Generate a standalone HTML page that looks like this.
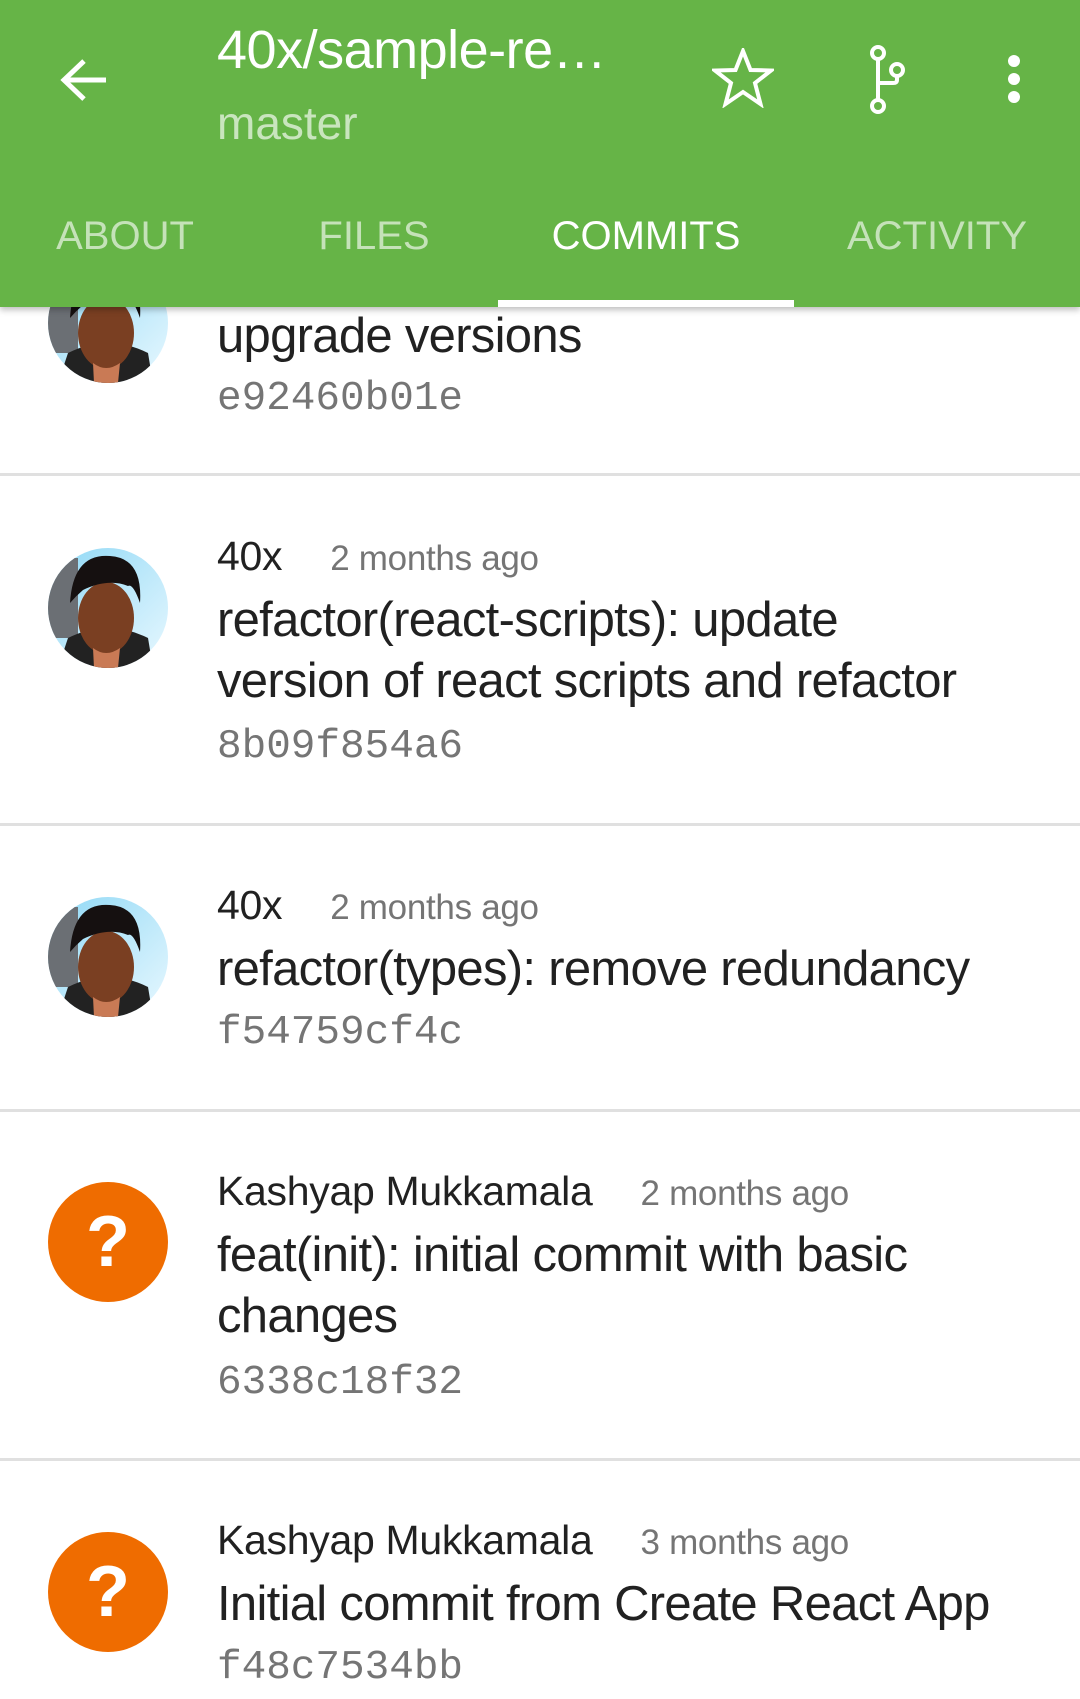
<!DOCTYPE html>
<html><head><meta charset="utf-8"><style>
*{margin:0;padding:0;box-sizing:border-box}
body{width:1080px;height:1699px;overflow:hidden;background:#fff;font-family:"Liberation Sans",Arial,sans-serif;position:relative}
.hdr{position:absolute;left:0;top:0;width:1080px;height:307px;background:#66b447;box-shadow:0 3px 6px rgba(0,0,0,.25);z-index:5}
.t{position:absolute;white-space:nowrap}
.tab{position:absolute;top:213px;font-size:40px;line-height:46px;color:rgba(255,255,255,.62);transform:translateX(-50%)}
.ul{position:absolute;left:498px;top:300px;width:296px;height:7px;background:#fff}
.sep{position:absolute;left:0;width:1080px;height:3px;background:#e0e0e0}
.au{position:absolute;left:217px;font-size:41px;line-height:46px;color:#212121;letter-spacing:-0.3px}
.tm{color:#757575;font-size:35px;margin-left:48px}
.msg{position:absolute;left:217px;font-size:49px;line-height:61px;color:#212121;letter-spacing:-0.7px;white-space:nowrap}
.hash{position:absolute;left:217px;font-family:"Liberation Mono",monospace;font-size:41px;line-height:46px;color:#757575}
.av{position:absolute;width:120px;height:120px}
.q{position:absolute;width:120px;height:120px;border-radius:50%;background:#ef6c00;color:#fff;font-size:72px;font-weight:bold;text-align:center;line-height:120px}
</style></head><body>
<svg width="0" height="0" style="position:absolute"><defs>
<clipPath id="c"><circle cx="60" cy="60" r="60"/></clipPath>
<linearGradient id="sky" x1="0" y1="0" x2="1" y2="1"><stop offset="0" stop-color="#8fd8f5"/><stop offset="1" stop-color="#e8f8ff"/></linearGradient>
<g id="face"><g clip-path="url(#c)">
<rect width="120" height="120" fill="url(#sky)"/>
<rect x="0" y="10" width="30" height="80" fill="#6b6f74"/>
<path d="M10 120 L20 90 Q60 70 100 90 L105 120Z" fill="#222"/>
<ellipse cx="58" cy="70" rx="28" ry="36" fill="#7a3f22"/>
<path d="M22 55 Q25 5 62 8 Q95 10 92 55 Q85 35 80 38 Q60 30 35 42 Q28 48 22 55Z" fill="#151010"/>
<path d="M45 100 Q58 110 72 100 L70 120 L46 120Z" fill="#c97a55"/>
</g></g></defs></svg>

<div class="hdr">
<svg class="t" style="left:58px;top:56px" width="52" height="48" viewBox="0 0 52 48"><path d="M48 24H8M26 5L6 24L26 43" fill="none" stroke="#fff" stroke-width="5"/></svg>
<div class="t" style="left:217px;top:19px;font-size:54px;line-height:62px;color:#fff;letter-spacing:-0.5px">40x/sample-re…</div>
<div class="t" style="left:217px;top:96px;font-size:46px;line-height:54px;color:rgba(255,255,255,.65)">master</div>
<svg class="t" style="left:712px;top:48px" width="62" height="60" viewBox="0 0 62 60"><path d="M31 3L38.5 22L59 22.5L43 35L48.5 56L31 44L13.5 56L19 35L3 22.5L23.5 22Z" fill="none" stroke="#fff" stroke-width="4" stroke-linejoin="miter"/></svg>
<svg class="t" style="left:860px;top:40px" width="60" height="80" viewBox="0 0 60 80"><g fill="none" stroke="#fff" stroke-width="4"><circle cx="18" cy="13" r="6"/><circle cx="18" cy="66" r="6"/><circle cx="37" cy="30" r="6"/><path d="M18 19V60M37 36V40Q37 43 33 43H18"/></g></svg>
<svg class="t" style="left:1004px;top:52px" width="20" height="54"><circle cx="10" cy="9" r="6" fill="#fff"/><circle cx="10" cy="27" r="6" fill="#fff"/><circle cx="10" cy="45" r="6" fill="#fff"/></svg>
<div class="tab" style="left:125px">ABOUT</div>
<div class="tab" style="left:374px">FILES</div>
<div class="tab" style="left:646px;color:#fff">COMMITS</div>
<div class="tab" style="left:937px">ACTIVITY</div>
<div class="ul"></div>
</div>

<svg class="av" style="left:48px;top:263px"><use href="#face"/></svg>
<div class="msg" style="top:306px">upgrade versions</div>
<div class="hash" style="top:376px">e92460b01e</div>
<div class="sep" style="top:473px"></div>

<svg class="av" style="left:48px;top:548px"><use href="#face"/></svg>
<div class="au" style="top:533px">40x<span class="tm">2 months ago</span></div>
<div class="msg" style="top:590px">refactor(react-scripts): update</div>
<div class="msg" style="top:651px">version of react scripts and refactor</div>
<div class="hash" style="top:724px">8b09f854a6</div>
<div class="sep" style="top:823px"></div>

<svg class="av" style="left:48px;top:897px"><use href="#face"/></svg>
<div class="au" style="top:882px">40x<span class="tm">2 months ago</span></div>
<div class="msg" style="top:939px">refactor(types): remove redundancy</div>
<div class="hash" style="top:1010px">f54759cf4c</div>
<div class="sep" style="top:1109px"></div>

<div class="q" style="left:48px;top:1182px">?</div>
<div class="au" style="top:1168px">Kashyap Mukkamala<span class="tm">2 months ago</span></div>
<div class="msg" style="top:1225px">feat(init): initial commit with basic</div>
<div class="msg" style="top:1286px">changes</div>
<div class="hash" style="top:1360px">6338c18f32</div>
<div class="sep" style="top:1458px"></div>

<div class="q" style="left:48px;top:1532px">?</div>
<div class="au" style="top:1517px">Kashyap Mukkamala<span class="tm">3 months ago</span></div>
<div class="msg" style="top:1574px">Initial commit from Create React App</div>
<div class="hash" style="top:1645px">f48c7534bb</div>
</body></html>
